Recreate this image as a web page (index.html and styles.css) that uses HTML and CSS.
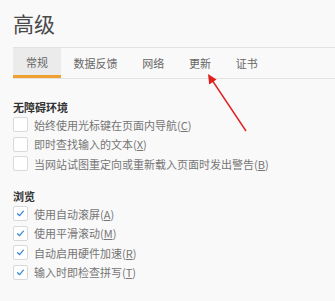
FILE: index.html
```html
<!DOCTYPE html>
<html lang="zh-CN">
<head>
<meta charset="utf-8">
<link rel="stylesheet" href="styles.css">
</head>
<body>
<div class="page">
  <h1 class="title">高级</h1>
  <div class="tabs">
    <div class="tab active">常规</div>
    <div class="tab">数据反馈</div>
    <div class="tab">网络</div>
    <div class="tab">更新</div>
    <div class="tab">证书</div>
  </div>
  <section class="group first">
    <h2 class="heading">无障碍环境</h2>
    <label class="row"><span class="box"></span><span class="text">始终使用光标键在页面内导航(<u>C</u>)</span></label>
    <label class="row"><span class="box"></span><span class="text">即时查找输入的文本(<u>X</u>)</span></label>
    <label class="row"><span class="box"></span><span class="text">当网站试图重定向或重新载入页面时发出警告(<u>B</u>)</span></label>
  </section>
  <section class="group">
    <h2 class="heading">浏览</h2>
    <label class="row"><span class="box checked"><svg viewBox="0 0 15 15"><path d="M4.2 7.8 L6.5 10 L10.8 4.8"/></svg></span><span class="text">使用自动滚屏(<u>A</u>)</span></label>
    <label class="row"><span class="box checked"><svg viewBox="0 0 15 15"><path d="M4.2 7.8 L6.5 10 L10.8 4.8"/></svg></span><span class="text">使用平滑滚动(<u>M</u>)</span></label>
    <label class="row"><span class="box checked"><svg viewBox="0 0 15 15"><path d="M4.2 7.8 L6.5 10 L10.8 4.8"/></svg></span><span class="text">自动启用硬件加速(<u>R</u>)</span></label>
    <label class="row"><span class="box checked"><svg viewBox="0 0 15 15"><path d="M4.2 7.8 L6.5 10 L10.8 4.8"/></svg></span><span class="text">输入时即检查拼写(<u>T</u>)</span></label>
  </section>
  <svg class="arrow" viewBox="0 0 335 301" width="335" height="301">
    <line x1="246" y1="131" x2="212" y2="80"/>
    <polygon points="208,74 209.2,84.5 216.5,79.5"/>
  </svg>
</div>
</body>
</html>
```
FILE: styles.css
```css
html, body {
  margin: 0;
  padding: 0;
  background: #f9f9f9;
}
body {
  font-family: "Noto Sans CJK SC", "Noto Sans", sans-serif;
  color: #666;
  width: 335px;
  height: 301px;
  overflow: hidden;
}
.page {
  position: relative;
  padding: 10px 0 0 13px;
}
.title {
  margin: 0 0 11px;
  font-size: 21px;
  line-height: 26px;
  font-weight: normal;
  color: #4a4a4a;
}
.tabs {
  display: flex;
  border-top: 1px solid #e2e2e2;
  border-bottom: 1px solid #e2e2e2;
  height: 30px;
}
.tab {
  padding: 0 12.4px;
  font-size: 11px;
  line-height: 30px;
  color: #666;
  box-sizing: border-box;
  height: 30px;
}
.tab.active {
  background: #ebebeb;
  border-bottom: 3px solid #f0a030;
  line-height: 28px;
  padding: 0 13px;
}
.group.first {
  margin-top: 20px;
}
.group {
  margin-top: 14.5px;
}
.heading {
  margin: 0;
  font-size: 11px;
  line-height: 16px;
  font-weight: bold;
  color: #333;
}
.row {
  display: flex;
  align-items: center;
  gap: 6px;
  height: 19.5px;
  font-size: 11px;
  color: #757575;
}
.box {
  width: 15px;
  height: 15px;
  box-sizing: border-box;
  border: 1px solid #d9d9d9;
  border-radius: 2px;
  background: #fff;
  display: flex;
  flex: none;
}
.box svg {
  width: 13px;
  height: 13px;
}
.box svg path {
  fill: none;
  stroke: #3a8ad6;
  stroke-width: 1.5;
  stroke-linecap: round;
  stroke-linejoin: round;
}
.text u {
  text-decoration-thickness: 1px;
  text-underline-offset: 1px;
}
.arrow {
  position: absolute;
  left: 0;
  top: 0;
  pointer-events: none;
}
.arrow line {
  stroke: #e0201c;
  stroke-width: 1.4;
}
.arrow polygon {
  fill: #e0201c;
}
```
